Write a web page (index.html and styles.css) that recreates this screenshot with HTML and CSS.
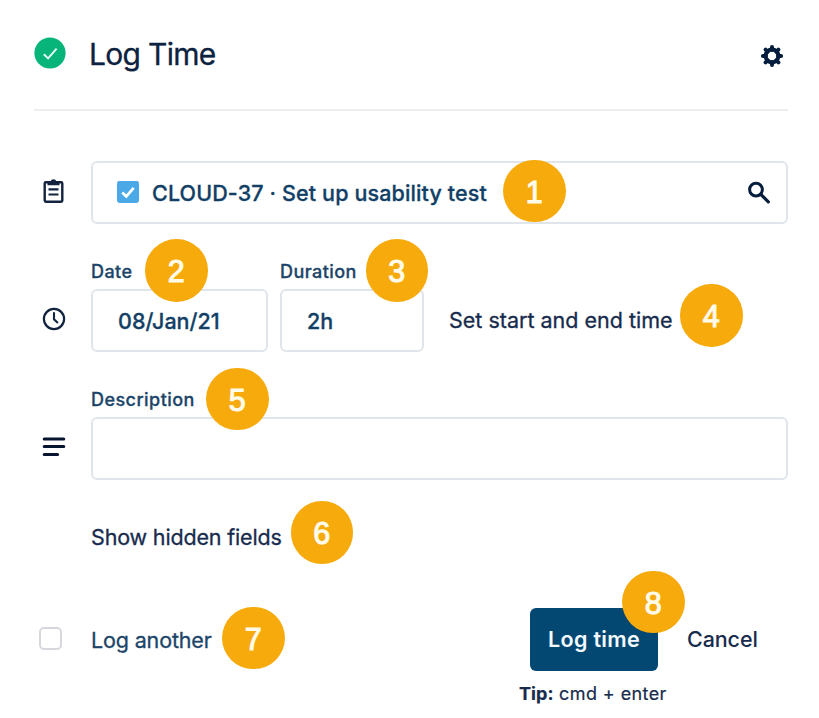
FILE: index.html
```
<!DOCTYPE html>
<html lang="en">
<head>
<meta charset="utf-8">
<title>Log Time</title>
<link rel="stylesheet" href="styles.css">
</head>
<body>
<main class="dialog">
  <header class="header">
    <svg class="status" viewBox="0 0 32 32"><circle cx="16" cy="16" r="15.6" fill="#07b57a"/><path d="M9.8 17.2l4.3 4.2 8.5-9.8" fill="none" stroke="#e6fff5" stroke-width="2"/></svg>
    <h1 class="title"><span>Log Time</span></h1>
    <svg class="gear" viewBox="0 0 24 24"><g stroke="#071d3d" stroke-width="4" stroke-linecap="round"><path d="M12 2.9v3M12 18.1v3M2.9 12h3M18.1 12h3M5.6 5.6l2 2M16.4 16.4l2 2M5.6 18.4l2-2M16.4 7.6l2-2"/></g><circle cx="12" cy="12" r="6.4" fill="none" stroke="#071d3d" stroke-width="4"/></svg>
  </header>

  <section class="row issue-row">
    <svg class="icon clipboard" viewBox="0 0 24 26"><rect x="2.7" y="4.2" width="17.6" height="19.6" rx="1.2" fill="none" stroke="#12233f" stroke-width="2.4"/><path d="M5.5 3.4h3a3.2 3.2 0 0 1 6 0h3v3.8h-12z" fill="#12233f"/><path d="M6.5 11.4h10M6.5 16.5h10" stroke="#12233f" stroke-width="2.2"/></svg>
    <div class="box issue">
      <svg class="task" viewBox="0 0 22 22"><rect width="22" height="22" rx="2.4" fill="#4aa9e6"/><path d="M5.3 11.4l4 4 7.4-8.6" fill="none" stroke="#fff" stroke-width="2.8"/></svg>
      <span class="issue-text">CLOUD-37 · Set up usability test</span>
      <svg class="search" viewBox="0 0 24 24"><circle cx="9" cy="8.6" r="6.4" fill="none" stroke="#071d3d" stroke-width="3"/><path d="M13.7 13.3l7.6 7.6" stroke="#071d3d" stroke-width="3.2" stroke-linecap="round"/></svg>
      <b class="badge b1">1</b>
    </div>
  </section>

  <section class="row time-row">
    <svg class="icon" viewBox="0 0 24 26"><circle cx="12" cy="13" r="10.1" fill="none" stroke="#12233f" stroke-width="2.2"/><path d="M12 7v6.2l3.4 3.2" fill="none" stroke="#12233f" stroke-width="2.1" stroke-linecap="round"/></svg>
    <div class="field date">
      <label class="label l-date">Date</label>
      <div class="box value"><span class="v-date">08/Jan/21</span></div>
      <b class="badge b2">2</b>
    </div>
    <div class="field duration">
      <label class="label l-duration">Duration</label>
      <div class="box value"><span class="v-dur">2h</span></div>
      <b class="badge b3">3</b>
    </div>
    <div class="range"><span class="t-range">Set start and end time</span><b class="badge b4">4</b></div>
  </section>

  <section class="row desc-row">
    <svg class="icon" viewBox="0 0 24 26"><path d="M2.2 4.9h19.6M2.2 12.6h19.6M2.2 20.5h13.4" stroke="#07152f" stroke-width="3" stroke-linecap="round"/></svg>
    <div class="field desc">
      <label class="label l-desc">Description</label>
      <div class="box"></div>
      <b class="badge b5">5</b>
    </div>
  </section>

  <div class="hidden-row"><span class="t-hidden">Show hidden fields</span><b class="badge b6">6</b></div>

  <footer class="footer">
    <span class="check"></span>
    <div class="another"><span class="t-another">Log another</span><b class="badge b7">7</b></div>
    <div class="button"><span class="t-button">Log time</span><b class="badge b8">8</b></div>
    <span class="cancel"><span class="t-cancel">Cancel</span></span>
  </footer>
  <p class="tip"><b>Tip:</b> cmd + enter</p>
</main>
</body>
</html>
```
FILE: styles.css
```
* { box-sizing: border-box; }
body {
  margin: 0;
  background: #fff;
  color: #172b4d;
  font-family: Inter, "Liberation Sans", sans-serif;
  font-size: 21.5px;
  white-space: nowrap;
}
svg { display: block; flex: none; }
.dialog { width: 819px; height: 718px; padding: 0 31px 0 34px; overflow: hidden; }

.header {
  display: flex;
  align-items: center;
  height: 111px;
  padding-bottom: 3px;
  border-bottom: 2px solid #ededef;
}
.status { width: 32px; height: 32px; }
.title {
  flex: 1;
  margin: 1px 0 0 23px;
  font-size: 30px;
  font-weight: 400;
  line-height: 36px;
  letter-spacing: -0.7px;
  color: #0d2140;
  -webkit-text-stroke: 0.3px #0d2140;
}
.gear { width: 24px; height: 24px; margin-right: 4px; position: relative; top: 3px; }

.row { display: flex; }
.icon { width: 24px; height: 26px; margin: 0 25px 0 8px; }
.clipboard { margin-bottom: 3px; }
.box { height: 63px; border: 2px solid #dfe5ea; border-radius: 6px; }
.issue-row { margin-top: 50px; align-items: center; }
.issue { position: relative; flex: 1; display: flex; align-items: center; padding: 0 15px 0 24px; }
.task { width: 22px; height: 22px; margin: -1px 13px 0 0; }
.issue-text { flex: 1; font-weight: 500; letter-spacing: 0.12px; color: #123f66; -webkit-text-stroke: 0.3px #123f66; }
.search { width: 24px; height: 24px; }

.time-row { margin-top: 35px; }
.time-row .icon, .desc-row .icon { margin-top: 47px; }
.field { position: relative; }
.label { display: block; height: 30px; line-height: 26px; font-size: 18px; font-weight: 500; letter-spacing: 0.45px; color: #1c4569; -webkit-text-stroke: 0.3px #1c4569; }
.date { width: 177px; }
.duration { width: 144px; margin-left: 12px; }
.value { display: flex; align-items: center; padding: 1px 0 0 25px; font-weight: 500; color: #123f66; -webkit-text-stroke: 0.3px #123f66; }
.range { position: relative; height: 63px; margin: 30px 0 0 25px; line-height: 62px; -webkit-text-stroke: 0.3px #172b4d; }

.desc-row { margin-top: 35px; }
.desc { flex: 1; }
.hidden-row { position: relative; margin: 41px 0 0 57px; height: 34px; line-height: 33px; letter-spacing: -0.16px; -webkit-text-stroke: 0.3px #172b4d; }

.footer { display: flex; align-items: center; height: 63px; margin-top: 53px; }
.check { width: 23px; height: 23px; margin: -2px 29px 0 5px; border: 2px solid #d7d8de; border-radius: 5px; }
.another { position: relative; width: 439px; line-height: 26px; letter-spacing: -0.15px; color: #1c4569; -webkit-text-stroke: 0.3px #1c4569; }
.button { position: relative; width: 128px; height: 63px; border-radius: 6px; background: #034872; color: #f3faff; font-weight: 600; line-height: 62px; letter-spacing: 0.3px; text-align: center; }
.cancel { margin: -2px 0 0 29px; font-weight: 500; letter-spacing: -0.1px; }
.tip { margin: 9px 0 0 485px; font-size: 18px; line-height: 28px; letter-spacing: 0.4px; -webkit-text-stroke: 0.2px #172b4d; }
.tip b { letter-spacing: 0.1px; }

.badge {
  position: absolute;
  width: 62.5px;
  height: 62.5px;
  border-radius: 50%;
  background: #f6aa0b;
  color: #fffbe9;
  font: 400 30.5px/64px "Liberation Sans", Arial, sans-serif;
  letter-spacing: 0;
  -webkit-text-stroke: 1.1px #fffbe9;
  text-align: center;
}
.b1 { left: 410px; top: -3.5px; }
.b2 { left: 54px; top: -20px; }
.b3 { left: 85.5px; top: -20px; }
.b4 { left: 231px; top: -5px; }
.b5 { left: 115px; top: -19.5px; }
.b6 { left: 199.5px; top: -20px; }
.b7 { left: 131px; top: -20px; }
.b8 { left: 92px; top: -37.5px; }
```
